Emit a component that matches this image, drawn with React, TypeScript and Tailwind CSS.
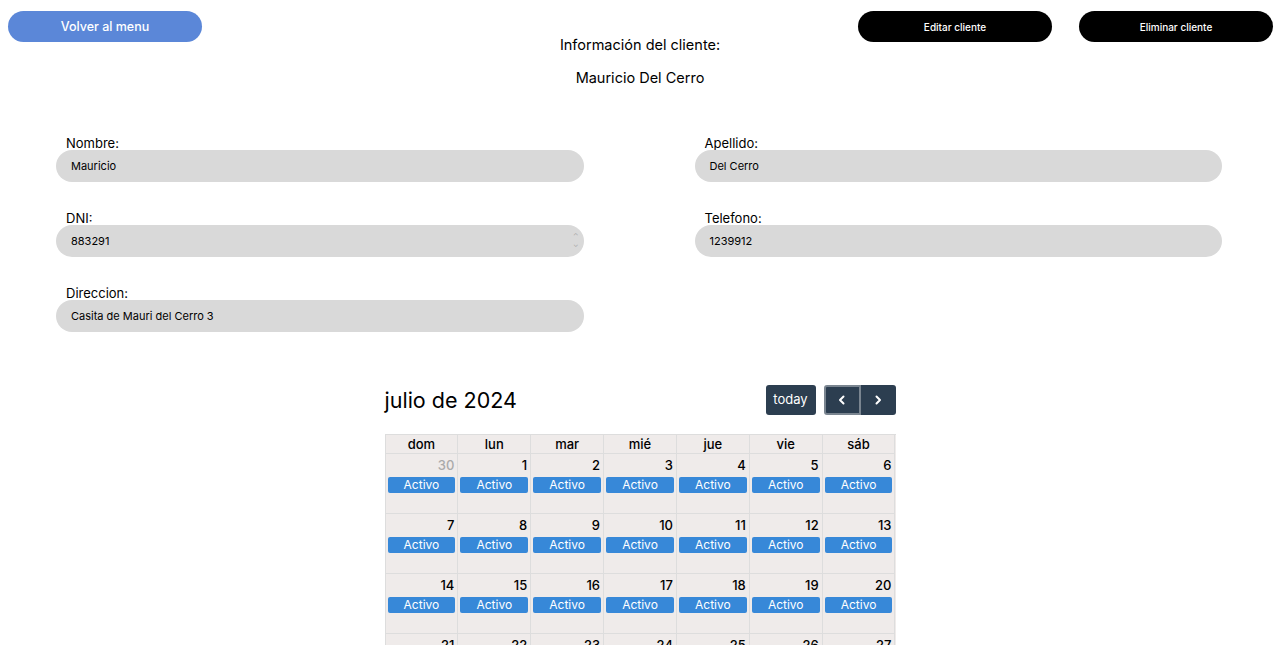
import React from "react";

const font = { fontFamily: "Inter, 'Noto Sans', sans-serif" };

function Field({ label, value, spinner }: { label: string; value: string; spinner?: boolean }) {
  return (
    <div className="flex flex-col">
      <label className="pl-[10px] text-[13px] leading-[14px] text-black">{label}</label>
      <div className="relative flex h-[32px] items-center rounded-[16px] bg-[#d9d9d9] pl-[15px] text-[11px] text-black">
        {value}
        {spinner && (
          <span className="absolute right-[5px] top-[9px] flex flex-col items-center text-[7px] leading-[6px] text-[#aaa]">
            <span>⌃</span>
            <span className="rotate-180">⌃</span>
          </span>
        )}
      </div>
    </div>
  );
}

const days = ["dom", "lun", "mar", "mié", "jue", "vie", "sáb"];
const weeks = [
  [30, 1, 2, 3, 4, 5, 6],
  [7, 8, 9, 10, 11, 12, 13],
  [14, 15, 16, 17, 18, 19, 20],
  [21, 22, 23, 24, 25, 26, 27],
];

export default function App() {
  return (
    <div className="min-h-[645px] bg-white" style={font}>
      <div className="relative flex items-start justify-between pl-[8px] pr-[7px] pt-[11px]">
        <button className="h-[31px] w-[194px] rounded-[16px] bg-[#5b87d8] pt-[1px] text-[12.5px] font-medium text-white">
          Volver al menu
        </button>
        <div className="flex gap-[27px]">
          <button className="h-[31px] w-[194px] rounded-[16px] bg-black pt-[1px] text-[10px] font-medium text-white">
            Editar cliente
          </button>
          <button className="h-[31px] w-[194px] rounded-[16px] bg-black pt-[1px] text-[10px] font-medium text-white">
            Eliminar cliente
          </button>
        </div>
      </div>
      <div className="-mt-[7px] flex flex-col items-center text-[14.5px] font-normal text-black">
        <div className="leading-[20px]">Información del cliente:</div>
        <div className="mt-[13px] leading-[20px]">Mauricio Del Cerro</div>
      </div>

      <div className="mt-[48px] grid grid-cols-2 gap-x-[111px] gap-y-[29px] pl-[56px] pr-[58px]">
        <Field label="Nombre:" value="Mauricio" />
        <Field label="Apellido:" value="Del Cerro" />
        <Field label="DNI:" value="883291" spinner />
        <Field label="Telefono:" value="1239912" />
        <Field label="Direccion:" value="Casita de Mauri del Cerro 3" />
      </div>

      <div className="mx-auto mt-[53px] w-[511px]">
        <div className="flex items-center justify-between">
          <div className="text-[21.5px] font-normal leading-[30px] text-black">julio de 2024</div>
          <div className="flex items-center gap-[8px]">
            <button className="h-[30px] w-[50px] rounded-[3px] bg-[#2c3e50] text-[13px] text-white">today</button>
            <div className="flex">
              <button className="flex h-[30px] w-[37px] items-center justify-center rounded-l-[3px] border-2 border-[#7a8590] bg-[#2c3e50] text-white">
                <svg width="12" height="12" viewBox="0 0 12 12" fill="none" stroke="white" strokeWidth="2" strokeLinecap="round" strokeLinejoin="round"><path d="M7.5 2.5 4 6l3.5 3.5" /></svg>
              </button>
              <button className="flex h-[30px] w-[35px] items-center justify-center rounded-r-[3px] bg-[#2c3e50] text-white">
                <svg width="12" height="12" viewBox="0 0 12 12" fill="none" stroke="white" strokeWidth="2" strokeLinecap="round" strokeLinejoin="round"><path d="M4.5 2.5 8 6l-3.5 3.5" /></svg>
              </button>
            </div>
          </div>
        </div>
        <div className="mt-[19px] border-l border-t border-[#dddddd] bg-[#efebea]">
          <div className="grid grid-cols-7">
            {days.map((d) => (
              <div key={d} className="h-[19px] border-b border-r border-[#dddddd] text-center text-[13px] font-medium leading-[19px] text-black">
                {d}
              </div>
            ))}
          </div>
          {weeks.map((w, i) => (
            <div key={i} className="grid grid-cols-7">
              {w.map((n, j) => (
                <div key={j} className="h-[60px] border-b border-r border-[#dddddd]">
                  <div className={`px-[3px] pt-[2px] text-right text-[13px] font-medium leading-[18px] ${i === 0 && j === 0 ? "text-[#aaaaaa]" : "text-black"}`}>
                    {n}
                  </div>
                  <div className="mx-[2px] mt-[3px] h-[16px] rounded-[2px] bg-[#3788d8] text-center text-[12px] leading-[16px] text-white">
                    Activo
                  </div>
                </div>
              ))}
            </div>
          ))}
        </div>
      </div>
    </div>
  );
}
